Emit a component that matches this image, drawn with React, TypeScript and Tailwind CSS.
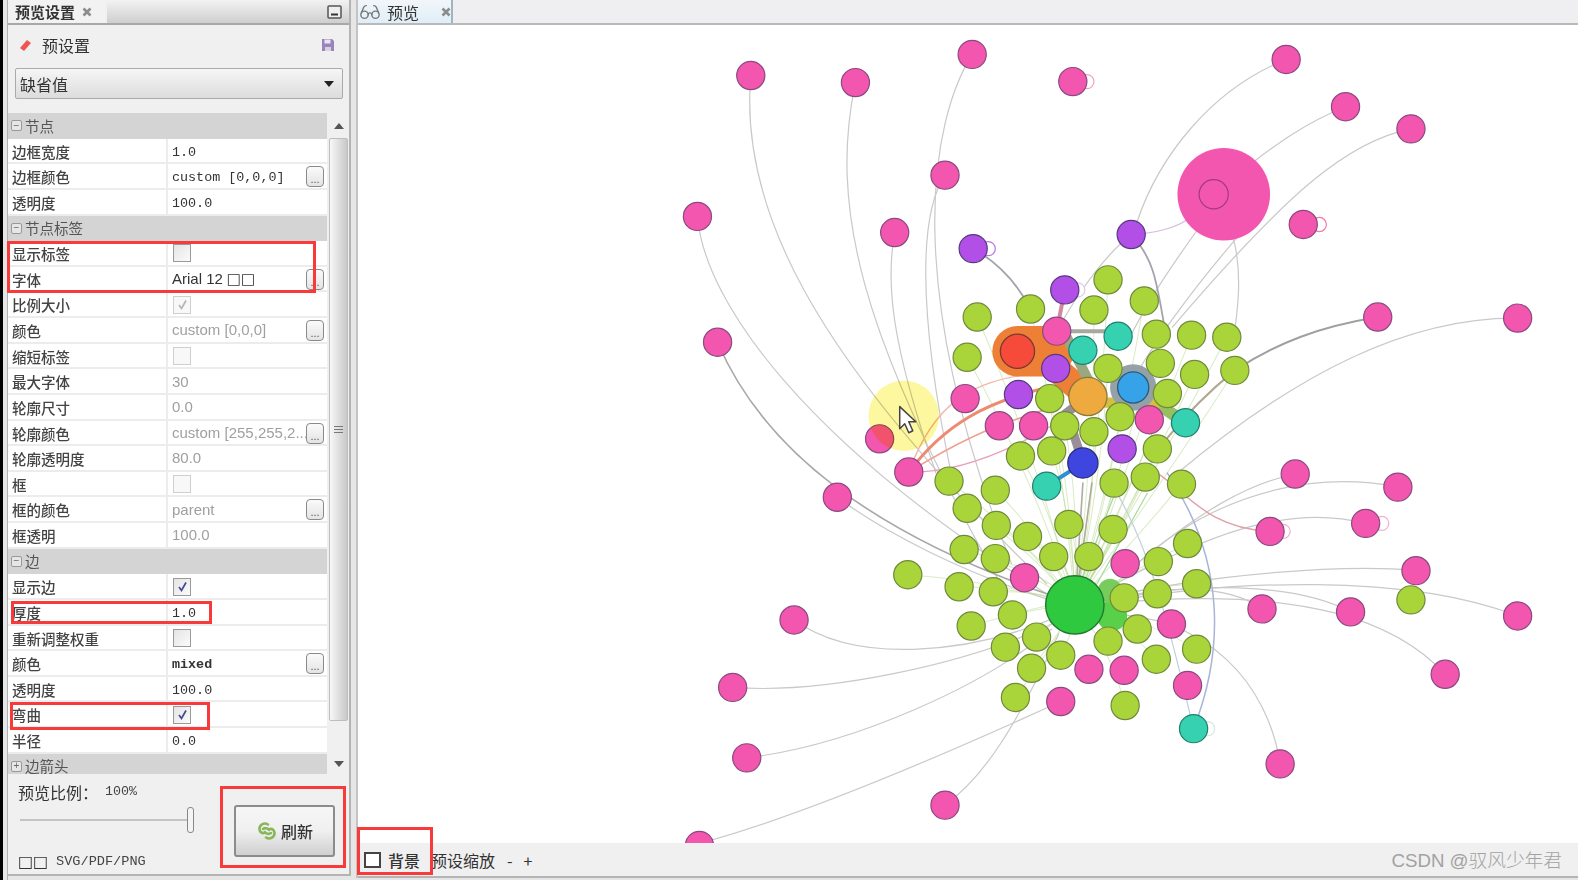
import { Glasses } from "lucide-react";

const cjk = "font-['Noto_Sans_CJK_SC',sans-serif]";

type Row =
  | { section: string; closed?: boolean }
  | { label: string; value?: string; mono?: boolean; bold?: boolean; off?: boolean; check?: boolean; box?: boolean; dots?: boolean; tofu?: boolean };

const rows: Row[] = [
  { section: "节点" },
  { label: "边框宽度", value: "1.0", mono: true },
  { label: "边框颜色", value: "custom [0,0,0]", mono: true, dots: true },
  { label: "透明度", value: "100.0", mono: true },
  { section: "节点标签" },
  { label: "显示标签", box: true },
  { label: "字体", value: "Arial 12", tofu: true, dots: true },
  { label: "比例大小", box: true, check: true, off: true },
  { label: "颜色", value: "custom [0,0,0]", off: true, dots: true },
  { label: "缩短标签", box: true, off: true },
  { label: "最大字体", value: "30", off: true },
  { label: "轮廓尺寸", value: "0.0", off: true },
  { label: "轮廓颜色", value: "custom [255,255,2...", off: true, dots: true },
  { label: "轮廓透明度", value: "80.0", off: true },
  { label: "框", box: true, off: true },
  { label: "框的颜色", value: "parent", off: true, dots: true },
  { label: "框透明", value: "100.0", off: true },
  { section: "边" },
  { label: "显示边", box: true, check: true },
  { label: "厚度", value: "1.0", mono: true },
  { label: "重新调整权重", box: true },
  { label: "颜色", value: "mixed", mono: true, bold: true, dots: true },
  { label: "透明度", value: "100.0", mono: true },
  { label: "弯曲", box: true, check: true },
  { label: "半径", value: "0.0", mono: true },
  { section: "边箭头", closed: true },
];

const pink = [[746,75],[850,82],[966,54],[1066,81],[1278,59],[1337,106],[1402,128],[939,174],[889,231],[693,215],[1295,223],[1369,315],[1508,316],[713,340],[874,436],[903,469],[832,494],[1287,471],[1389,484],[1357,520],[1262,528],[1407,567],[1254,605],[1342,608],[1508,612],[1436,670],[1272,759],[789,616],[728,683],[742,753],[939,800],[695,840],[1050,329],[959,396],[993,423],[1027,423],[1142,417],[1018,574],[1118,560],[1164,620],[1082,665],[1117,666],[1180,681],[1054,697]];
const lime = [[1101,278],[1137,299],[971,315],[1024,307],[1087,308],[1149,332],[1184,333],[1219,335],[961,355],[1153,361],[1101,366],[1187,372],[1227,368],[1043,396],[1160,391],[1113,414],[1058,423],[1087,429],[1045,448],[1014,453],[1150,446],[1107,480],[1138,474],[1174,481],[943,478],[989,487],[961,505],[990,522],[1021,533],[1062,521],[1106,526],[958,546],[989,555],[1047,553],[1082,553],[1151,558],[1180,540],[902,571],[953,583],[987,588],[1117,594],[1150,590],[1189,580],[1006,611],[965,622],[1030,633],[1130,625],[1101,637],[999,643],[1054,651],[1149,655],[1189,645],[1025,664],[1009,693],[1118,701],[1402,596]];
const purple = [[967,247],[1124,233],[1058,288],[1049,366],[1012,392],[1115,446]];
const teal = [[1111,334],[1076,348],[1178,420],[1040,483],[1186,724]];
const loops = [[1080,81,"#f0a0c8"],[982,247,"#b878e0"],[1311,223,"#f07aa8"],[1275,528,"#f0b0d0"],[1373,520,"#f0b0d0"],[1200,724,"#d8e8e4"],[1071,288,"#e0c8f0"]] as const;

const grayEdges = [
  "M746 75C735 200 800 350 1040 580",
  "M850 82C825 200 850 330 1000 590",
  "M966 54C925 120 895 280 1005 560",
  "M939 174C915 210 910 300 945 470",
  "M889 231C880 280 885 340 930 470",
  "M693 215C700 300 800 440 1040 590",
  "M832 494C880 530 960 570 1040 595",
  "M789 616C850 660 960 650 1045 615",
  "M728 683C820 690 960 660 1045 620",
  "M742 753C850 740 980 680 1045 625",
  "M939 800C980 770 1010 720 1052 630",
  "M695 838C800 810 960 740 1054 697",
  "M1278 59C1200 90 1150 160 1130 220",
  "M1337 106C1290 125 1260 150 1240 165",
  "M1402 128C1340 140 1280 190 1165 325",
  "M1508 316C1400 315 1290 370 1170 470",
  "M1287 471C1240 480 1190 510 1130 560",
  "M1389 484C1320 470 1220 480 1130 560",
  "M1357 520C1280 500 1200 530 1090 590",
  "M1407 567C1340 560 1200 570 1095 595",
  "M1254 605C1220 580 1150 580 1095 600",
  "M1342 608C1290 580 1180 575 1095 600",
  "M1508 612C1400 570 1220 575 1095 600",
  "M1436 670C1390 620 1300 580 1095 600",
  "M1272 759C1260 680 1200 610 1095 610",
  "M1124 233C1090 260 1060 310 1050 330",
  "M1190 228C1160 270 1140 300 1120 340",
  "M1230 235C1200 270 1160 320 1130 370",
  "M1225 235C1235 270 1230 310 1225 340",
];

function Dots() {
  return (
    <span className="absolute right-[3px] top-[2px] w-[18px] h-[21px] rounded-[4px] border border-[#8a8a8a] bg-gradient-to-b from-[#fafafa] to-[#e4e4e4] text-[#555] text-[11px] leading-[24px] text-center font-['Liberation_Sans',sans-serif]">
      ...
    </span>
  );
}

function Box({ check, off }: { check?: boolean; off?: boolean }) {
  return (
    <span className={`w-[18px] h-[18px] border flex items-center justify-center ${off ? "border-[#cfcfcf] bg-[#f8f8f8]" : "border-[#9a9a9a] bg-gradient-to-br from-[#e4e4e4] to-[#fbfbfb]"}`}>
      {check && (
        <svg width="13" height="13" viewBox="0 0 13 13" fill="none">
          <path d="M3 7l2.5 3.5L10 2.5" stroke={off ? "#b5b5b5" : "#46469a"} strokeWidth="1.7" />
        </svg>
      )}
    </span>
  );
}

function PropRow({ row }: { row: Row }) {
  if ("section" in row) {
    return (
      <div className="h-[25.63px] shrink-0 bg-[#d4d4d4] flex items-center pl-[3px] gap-[3px]">
        <span className="w-[11px] h-[11px] border border-[#999] bg-[#e6e6e6] rounded-[2px] flex items-center justify-center text-[#666] text-[10px] leading-none font-['Liberation_Sans',sans-serif]">
          {row.closed ? "+" : "−"}
        </span>
        <span className={`${cjk} text-[14.5px] leading-none text-[#555]`}>{row.section}</span>
      </div>
    );
  }
  let valueClass = "font-['Liberation_Sans',sans-serif] text-[15px]";
  if (row.mono) valueClass = "font-['Liberation_Mono',monospace] text-[13.4px] pt-[4px]";
  return (
    <div className="h-[25.63px] shrink-0 bg-white border-b-2 border-[#ececec] flex items-center">
      <div className={`w-[160px] h-full flex items-center pl-[4px] pt-[3px] border-r-2 border-[#ececec] ${cjk} text-[14.5px] leading-none text-[#444] font-medium whitespace-nowrap`}>
        {row.label}
      </div>
      <div className="relative flex-1 h-full flex items-center pl-[4px]">
        {row.box ? (
          <span className="ml-[1px] mt-[1px]"><Box check={row.check} off={row.off} /></span>
        ) : (
          <span className={`${valueClass} leading-none whitespace-nowrap ${row.off ? "text-[#a0a0a0]" : "text-[#333]"} ${row.bold ? "font-bold" : ""}`}>
            {row.value}
            {row.tofu && <span className="ml-[4px] font-['DejaVu_Sans',sans-serif] font-bold">□□</span>}
          </span>
        )}
        {row.dots && <Dots />}
      </div>
    </div>
  );
}

function CloseMark() {
  return (
    <svg width="10" height="10" viewBox="0 0 10 10" className="shrink-0">
      <path d="M1.5 1.5l7 7M8.5 1.5l-7 7" stroke="#8c8c8c" strokeWidth="2.6" />
    </svg>
  );
}

function Nodes({ list, fill, stroke, r = 14 }: { list: number[][]; fill: string; stroke: string; r?: number }) {
  return (
    <>
      {list.map(([x, y]) => (
        <circle key={`${x}-${y}`} cx={x} cy={y} r={r} fill={fill} stroke={stroke} strokeWidth="1.2" />
      ))}
    </>
  );
}

function Graph() {
  return (
    <svg width="1220" height="818" viewBox="355.7 24.8 1212.3 812.8" fill="none" className="block">
      <g strokeLinecap="round">
        {lime.slice(0, 55).map(([x, y]) => (
          <path key={`${x}-${y}`} d={`M${x} ${y}Q${(x + 1068) / 2 + 10} ${(y + 601) / 2 - 8} 1068 601`} stroke="#b6d88a" strokeOpacity="0.5" strokeWidth="1" />
        ))}
        {grayEdges.map((d) => (
          <path key={d} d={d} stroke="#c9c9c9" strokeWidth="1.2" />
        ))}
        <path d="M713 340C760 450 870 530 1040 590" stroke="#a8a8a8" strokeWidth="1.6" />
        <path d="M1369 315C1310 325 1270 340 1227 368" stroke="#a0a0a0" strokeWidth="2" />
        <path d="M1227 368C1200 390 1180 410 1160 435" stroke="#b0a890" strokeWidth="2" />
        <path d="M1124 233C1150 260 1150 290 1160 340" stroke="#a4a4ae" strokeWidth="1.8" />
        <path d="M967 247C990 260 1010 280 1024 307" stroke="#a4a4ae" strokeWidth="1.8" />
        <path d="M1124 233C1150 232 1170 225 1180 218" stroke="#dcb8e0" strokeWidth="1.2" />
        <path d="M1186 724C1215 650 1220 560 1160 470" stroke="#a8b4d8" strokeWidth="1.5" />
        <path d="M1186 724C1170 660 1150 560 1110 490" stroke="#c0d0dc" strokeWidth="1.2" />
        <path d="M1262 528C1200 525 1180 490 1150 470" stroke="#e0a0a8" strokeWidth="1.4" />
        <path d="M1076 480L1070 575M1085 480L1072 575" stroke="#b0aca0" strokeWidth="1.6" />
        <path d="M1106 495L1075 575M1140 490L1090 580" stroke="#a8d8a0" strokeWidth="1.2" />
        <path d="M1040 483L1076 460" stroke="#2f8fd0" strokeWidth="4" />
        <path d="M1076 460L1060 410L1081 394" stroke="#9a8f98" strokeWidth="9" />
        <path d="M1050 329L1058 288" stroke="#d08aa0" strokeWidth="4" />
        <path d="M1050 329L1110 329" stroke="#a8a8a0" strokeWidth="4" />
        <path d="M1126 385L1178 420" stroke="#96c060" strokeWidth="12" />
        <path d="M1090 400L1160 400" stroke="#d4c040" strokeWidth="10" />
        <path d="M903 469C940 420 980 400 1040 385" stroke="#ee8a70" strokeWidth="3" />
        <path d="M903 469C950 440 980 425 1045 405" stroke="#f0a090" strokeWidth="1.6" />
        <path d="M903 469C930 395 970 380 1020 372" stroke="#efb8a8" strokeWidth="1.4" />
        <path d="M903 469C950 470 1000 450 1050 420" stroke="#e8a0c0" strokeWidth="1.2" />
        <path d="M1011 349L1042 349" stroke="#ee7f37" strokeWidth="50" />
        <path d="M1042 360L1081 394" stroke="#ee7f37" strokeWidth="26" />
        <path d="M1060 335L1085 385" stroke="#98a880" strokeWidth="10" />
      </g>
      <circle cx="1126" cy="385" r="23" fill="#94a2a8" />
      <circle cx="1105" cy="612" r="15" fill="#58d04a" />
      <circle cx="1103" cy="587" r="12" fill="#78cc5c" />
      {loops.map(([x, y, c]) => (
        <circle key={x} cx={x} cy={y} r="7" stroke={c} strokeWidth="1.2" fill="#fff" />
      ))}
      <Nodes list={lime} fill="#a9d53a" stroke="#6f8a3c" />
      <Nodes list={pink} fill="#f356ae" stroke="#8a4a80" />
      <Nodes list={purple} fill="#b14fe6" stroke="#553a80" />
      <Nodes list={teal} fill="#36d1b0" stroke="#1f8070" />
      <circle cx="1011" cy="349" r="17" fill="#f64a3a" stroke="#7a3a30" strokeWidth="1.3" />
      <circle cx="1081" cy="394" r="19" fill="#eea93f" stroke="#8a7a3a" strokeWidth="1.3" />
      <circle cx="1126" cy="385" r="15.5" fill="#36a3e8" stroke="#2a5a80" strokeWidth="1.3" />
      <circle cx="1076" cy="460" r="15" fill="#3f46e0" stroke="#2a2f80" strokeWidth="1.3" />
      <circle cx="1068" cy="601" r="29" fill="#2fc93f" stroke="#1f7a30" strokeWidth="1.4" />
      <circle cx="1216" cy="193" r="46" fill="#f356ae" />
      <circle cx="1206" cy="193" r="14.5" stroke="#a03a80" strokeWidth="1.2" />
      <circle cx="898" cy="413" r="35" fill="#fdf7a0" className="mix-blend-multiply" />
      <path d="M894 404v22l5-5 4 9 4-2-4-9h7z" fill="#fff" stroke="#444" strokeWidth="1.5" strokeLinejoin="round" />
    </svg>
  );
}

export default function App() {
  return (
    <div className="relative w-[1578px] h-[880px] overflow-hidden flex bg-[#e6e6e6] blur-[0.5px]">
      {/* Left edge of the window behind */}
      <div className="w-[8px] shrink-0 flex border-r border-[#b0b0b0]">
        <div className="w-[3px] bg-black" />
      </div>

      {/* Preview settings panel */}
      <div className="w-[343px] h-[876px] shrink-0 flex flex-col bg-[#f0f0f0] border-r-2 border-b-2 border-[#b4b4b4]">
        <div className="h-[25px] shrink-0 flex border-b-2 border-[#a8a8a8]">
          <div className={`w-[97px] flex items-center pl-[7px] gap-[7px] bg-[#f2f2f2] ${cjk} text-[15px] leading-none font-bold text-[#333]`}>
            预览设置
            <CloseMark />
          </div>
          <div className="flex-1 ml-[2px] flex items-center justify-end pr-[7px] bg-gradient-to-b from-[#f2f2f2] to-[#cfcfcf]">
            <svg width="15" height="14" viewBox="0 0 15 14" fill="none">
              <rect x="1" y="1" width="13" height="12" rx="1" stroke="#555" strokeWidth="1.5" fill="#eee" />
              <path d="M4 9.5h7" stroke="#333" strokeWidth="2" />
            </svg>
          </div>
        </div>

        <div className="h-[40px] shrink-0 flex items-center pl-[10px] pr-[14px]">
          <svg width="15" height="15" viewBox="0 0 15 15">
            <path d="M2 10l7-8 4 3-7 8z" fill="#ee5555" />
          </svg>
          <span className={`ml-[9px] ${cjk} text-[16px] leading-none text-[#333]`}>预设置</span>
          <svg width="14" height="14" viewBox="0 0 14 14" className="ml-auto">
            <path d="M1 1h10l2 2v10H1z" fill="#9a84bc" />
            <path d="M3.5 1.5h6v4h-6z" fill="#e8e4f0" />
            <path d="M4 9h6v4H4z" fill="#d8d0e4" />
          </svg>
        </div>

        <div className={`ml-[7px] mr-[6px] mt-[3px] h-[31px] shrink-0 flex items-center justify-between pl-[4px] pr-[8px] border border-[#aaa] rounded-[2px] bg-gradient-to-b from-[#f6f6f6] to-[#dcdcdc] ${cjk} text-[16px] leading-none text-[#333]`}>
          缺省值
          <svg width="10" height="6" viewBox="0 0 10 6">
            <path d="M0 0h10L5 6z" fill="#222" />
          </svg>
        </div>

        <div className="h-[661px] shrink-0 mt-[14px] flex">
          <div className="w-[319px] shrink-0 flex flex-col overflow-hidden">
            {rows.map((r, i) => (
              <PropRow key={i} row={r} />
            ))}
          </div>
          <div className="ml-[2px] w-[19px] flex flex-col">
            <div className="h-[25px] flex items-center justify-center">
              <svg width="10" height="6" viewBox="0 0 10 6">
                <path d="M0 6h10L5 0z" fill="#555" />
              </svg>
            </div>
            <div className="h-[583px] border border-[#bdbdbd] rounded-[2px] bg-gradient-to-r from-[#f8f8f8] to-[#c8c8c8] flex flex-col items-center justify-center gap-[2px]">
              <span className="w-[9px] h-[1px] bg-[#777]" />
              <span className="w-[9px] h-[1px] bg-[#777]" />
              <span className="w-[9px] h-[1px] bg-[#777]" />
            </div>
            <div className="flex-1 flex items-center justify-center pt-[32px]">
              <svg width="10" height="6" viewBox="0 0 10 6">
                <path d="M0 0h10L5 6z" fill="#555" />
              </svg>
            </div>
          </div>
        </div>

        <div className="flex-1 flex">
          <div className="w-[226px] flex flex-col pl-[10px] pt-[9px]">
            <div className="flex items-center h-[18px]">
              <span className={`${cjk} text-[16px] leading-none text-[#333]`}>预览比例：</span>
              <span className="ml-[7px] font-['Liberation_Mono',monospace] text-[13.33px] leading-none text-[#444]">100%</span>
            </div>
            <div className="relative h-[26px] mt-[6px] w-[176px] flex items-center">
              <div className="w-[172px] ml-[2px] h-[2px] bg-[#c4c4c4]" />
              <div className="absolute right-0 top-0 w-[7px] h-[26px] rounded-[3px] border border-[#888] bg-[#f4f4f4]" />
            </div>
            <div className="flex items-center h-[18px] mt-[20px]">
              <span className="font-['DejaVu_Sans',sans-serif] text-[16px] leading-none text-[#333] w-[38px]">□□</span>
              <span className="font-['Liberation_Mono',monospace] text-[13.6px] leading-none text-[#444]">SVG/PDF/PNG</span>
            </div>
          </div>
          <div className="mt-[31px] w-[101px] h-[52px] rounded-[3px] border-2 border-[#8c8c8c] bg-gradient-to-b from-[#f6f6f6] via-[#f0f0f0] to-[#cfcfcf] flex items-center justify-center gap-[3px]">
            <svg width="22" height="22" viewBox="0 0 22 22" fill="none" stroke="#8ab65a" strokeWidth="2.6" strokeLinecap="round">
              <path d="M12 4.5C8 2 3 5 3.5 9.5c.3 2.5 2.5 4 4.5 3.5" />
              <path d="M10 17.5c4 2.5 9-.5 8.5-5-.3-2.5-2.5-4-4.5-3.5" />
              <path d="M7 9c2-1.5 5-1 6 1M15 13c-2 1.5-5 1-6-1" />
            </svg>
            <span className={`${cjk} text-[16px] leading-none text-[#333] font-medium`}>刷新</span>
          </div>
        </div>
      </div>

      {/* Preview panel */}
      <div className="ml-[5px] flex-1 h-[878px] flex flex-col bg-white border-l-2 border-[#c4c4c4] min-w-0">
        <div className="h-[25px] shrink-0 flex bg-[#efeef0] border-b-2 border-[#b9b9b9]">
          <div className={`w-[95px] shrink-0 flex items-center pl-[1px] whitespace-nowrap bg-gradient-to-b from-[#f2f6f9] to-[#e0eef8] border-r-2 border-[#9fb4c4] ${cjk} text-[16px] leading-none text-[#333]`}>
            <Glasses size={22} strokeWidth={1.5} className="shrink-0 text-[#777]" />
            <span className="ml-[6px] shrink-0">预览</span>
            <span className="ml-[22px] shrink-0"><CloseMark /></span>
          </div>
        </div>
        <div className="h-[818px] shrink-0 overflow-hidden">
          <Graph />
        </div>
        <div className={`flex-1 flex items-center bg-[#f0f0f0] border-b-2 border-[#b4b4b4] pl-[6px] pr-[16px] ${cjk} text-[16px] leading-none text-[#333]`}>
          <span className="w-[17px] h-[16px] border-2 border-[#444] bg-white" />
          <span className="ml-[7px] font-medium">背景</span>
          <span className="ml-[11px]">预设缩放</span>
          <span className="ml-[12px]">-</span>
          <span className="ml-[11px]">+</span>
          <span className="ml-auto mt-[3px] text-[18.7px] text-[#a2a2a2] font-light font-['Liberation_Sans','Noto_Sans_CJK_SC',sans-serif]">CSDN @驭风少年君</span>
        </div>
      </div>

      {/* Red annotation boxes drawn over the screenshot */}
      <div className="absolute left-[7px] top-[241px] w-[309px] h-[52px] border-[3px] border-[#f93a3a]" />
      <div className="absolute left-[11px] top-[601px] w-[201px] h-[23px] border-[3px] border-[#f93a3a]" />
      <div className="absolute left-[10px] top-[702px] w-[200px] h-[28px] border-[3px] border-[#f93a3a]" />
      <div className="absolute left-[220px] top-[786px] w-[126px] h-[82px] border-[3px] border-[#f93a3a]" />
      <div className="absolute left-[357px] top-[827px] w-[76px] h-[48px] border-[3px] border-[#f93a3a]" />
    </div>
  );
}
